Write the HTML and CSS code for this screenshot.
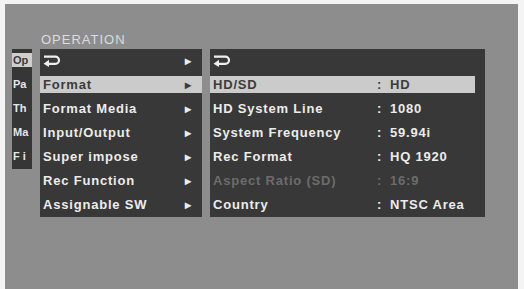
FILE: index.html
```html
<!DOCTYPE html>
<html lang="en">
<head>
  <meta charset="UTF-8">
  <title>Operation Menu</title>
  <link rel="stylesheet" href="styles.css">
</head>
<body>
  <div class="screen">
    <div class="title">OPERATION</div>
    <div class="menus">
      <div class="tabs">
        <div class="tab"><span class="on">Op</span></div>
        <div class="tab"><span>Pa</span></div>
        <div class="tab"><span>Th</span></div>
        <div class="tab"><span>Ma</span></div>
        <div class="tab"><span>F i</span></div>
      </div>

      <div class="panel main">
        <div class="row">
          <svg class="back" viewBox="0 0 18 12" width="18" height="12"><path d="M1 1.6 H12.4 A3.6 3.6 0 0 1 12.4 8.8 H5" fill="none" stroke="currentColor" stroke-width="2.2"/><polygon points="0.5,8.8 6,4.8 6,12" fill="currentColor"/></svg>
          <span class="arrow">&#9656;</span>
        </div>
        <div class="row sel"><span>Format</span><span class="arrow">&#9656;</span></div>
        <div class="row"><span>Format Media</span><span class="arrow">&#9656;</span></div>
        <div class="row"><span>Input/Output</span><span class="arrow">&#9656;</span></div>
        <div class="row"><span>Super impose</span><span class="arrow">&#9656;</span></div>
        <div class="row"><span>Rec Function</span><span class="arrow">&#9656;</span></div>
        <div class="row"><span>Assignable SW</span><span class="arrow">&#9656;</span></div>
      </div>

      <div class="panel sub">
        <div class="row">
          <svg class="back" viewBox="0 0 18 12" width="18" height="12"><path d="M1 1.6 H12.4 A3.6 3.6 0 0 1 12.4 8.8 H5" fill="none" stroke="currentColor" stroke-width="2.2"/><polygon points="0.5,8.8 6,4.8 6,12" fill="currentColor"/></svg>
        </div>
        <div class="row sel"><span class="key">HD/SD</span><span class="colon">:</span><span>HD</span></div>
        <div class="row"><span class="key">HD System Line</span><span class="colon">:</span><span>1080</span></div>
        <div class="row"><span class="key">System Frequency</span><span class="colon">:</span><span>59.94i</span></div>
        <div class="row"><span class="key">Rec Format</span><span class="colon">:</span><span>HQ 1920</span></div>
        <div class="row off"><span class="key">Aspect Ratio (SD)</span><span class="colon">:</span><span>16:9</span></div>
        <div class="row"><span class="key">Country</span><span class="colon">:</span><span>NTSC Area</span></div>
      </div>
    </div>
  </div>
</body>
</html>
```

FILE: styles.css
```css
* {
  margin: 0;
  padding: 0;
  box-sizing: border-box;
}

body {
  background: #f4f4f4;
  font-family: 'Liberation Sans', Arial, sans-serif;
  color: #ececec;
}

.screen {
  margin: 4px 6px 0 5px;
  height: 285px;
  background: #8d8d8d;
  padding-top: 28px;
}

.title {
  margin-left: 36px;
  height: 17px;
  font-size: 13px;
  letter-spacing: 1px;
  color: #dcdcdc;
}

.menus {
  display: flex;
  align-items: flex-start;
}

/* little page tabs on the far left */
.tabs {
  margin-left: 7px;
  width: 20px;
  background: #363636;
  overflow: hidden;
}

.tab {
  height: 24px;
  padding-top: 4px;
  font-size: 11px;
  font-weight: bold;
  white-space: nowrap;
}

.tab span {
  display: block;
  height: 14px;
  line-height: 14px;
  padding-left: 1px;
  color: #e6e6e6;
}

.tab .on {
  background: #cfcfcf;
  color: #3a3a3a;
}

.panel {
  display: flex;
  flex-direction: column;
  background: #383838;
  font-size: 13px;
  font-weight: bold;
  letter-spacing: 0.8px;
}

.main {
  margin-left: 8px;
  width: 162px;
}

.sub {
  margin-left: 8px;
  width: 275px;
  padding-right: 10px;
}

.row {
  display: flex;
  align-items: center;
  height: 17px;
  margin: 3px 0 4px;
  padding-left: 3px;
  white-space: nowrap;
}

.main .row {
  justify-content: space-between;
  padding-right: 11px;
}

.arrow {
  font-size: 12px;
  letter-spacing: 0;
}

.back {
  color: #efefef;
}

.sel {
  background: #cbcbcb;
  color: #3c3c3c;
}

.off {
  color: #6c6c6c;
}

.key {
  width: 164px;
}

.colon {
  width: 13px;
}
```
